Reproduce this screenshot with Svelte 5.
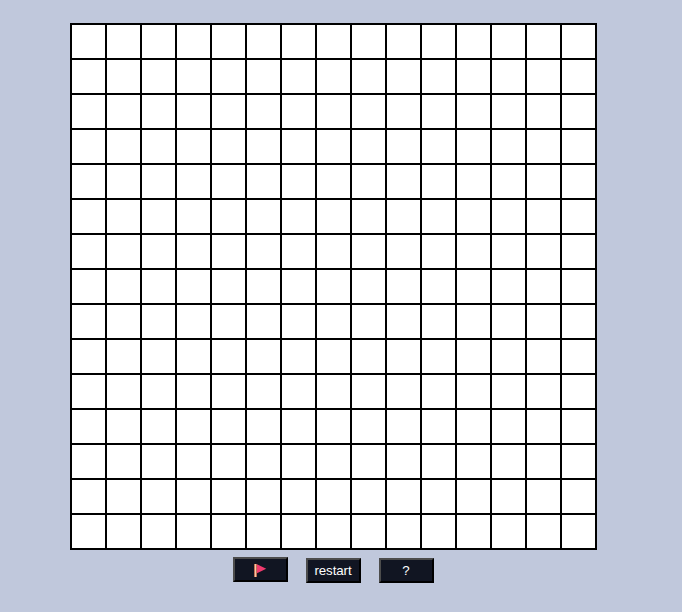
<script>
  const size = 15;
  const cells = Array.from({ length: size * size }, (_, i) => i);
</script>

<main>
  <div class="board">
    {#each cells as cell (cell)}
      <div class="cell"></div>
    {/each}
  </div>
  <div class="controls">
    <button class="flag" aria-label="flag">
      <svg width="13" height="13" viewBox="0 0 13 13">
        <path d="M2.5 0 L12.2 4.8 L2.5 9.6 Z" fill="#f03a6e" />
        <rect x="0" y="0" width="3" height="13" fill="#c07055" />
        <rect x="1" y="0" width="1" height="13" fill="#f8c8a4" />
      </svg>
    </button>
    <button>restart</button>
    <button>?</button>
  </div>
</main>

<style>
  :global(body) {
    margin: 0;
    background: #c0c8dc;
  }
  main {
    box-sizing: border-box;
    height: 612px;
    padding: 23px 0 0 70px;
    background: #c0c8dc;
  }
  .board {
    display: grid;
    grid-template-columns: repeat(15, 33px);
    grid-auto-rows: 33px;
    gap: 2px;
    width: 523px;
    padding: 2px;
    background: #000;
  }
  .cell {
    background: #fff;
  }
  .controls {
    display: flex;
    align-items: flex-start;
    justify-content: center;
    gap: 18px;
    width: 527px;
    padding-top: 8px;
  }
  button {
    display: flex;
    align-items: center;
    justify-content: center;
    box-sizing: border-box;
    width: 55px;
    height: 25px;
    margin: 0;
    padding: 0 1px 0 0;
    border: 2px solid;
    border-color: #4c4c4c #000 #000 #4c4c4c;
    border-radius: 0;
    background: #111522;
    color: #fff;
    font: 13.333px "Liberation Sans", Arial, sans-serif;
    letter-spacing: -0.1px;
  }
  .flag {
    justify-content: flex-start;
    align-items: flex-start;
    margin-top: -1px;
    padding: 5px 0 0 19px;
  }
  svg {
    display: block;
  }
</style>
